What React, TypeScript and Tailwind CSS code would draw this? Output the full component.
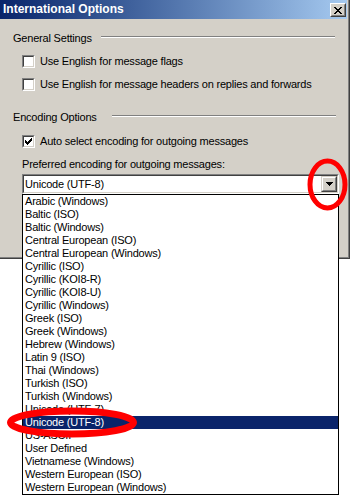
import React from "react";

const encodings = [
  "Arabic (Windows)",
  "Baltic (ISO)",
  "Baltic (Windows)",
  "Central European (ISO)",
  "Central European (Windows)",
  "Cyrillic (ISO)",
  "Cyrillic (KOI8-R)",
  "Cyrillic (KOI8-U)",
  "Cyrillic (Windows)",
  "Greek (ISO)",
  "Greek (Windows)",
  "Hebrew (Windows)",
  "Latin 9 (ISO)",
  "Thai (Windows)",
  "Turkish (ISO)",
  "Turkish (Windows)",
  "Unicode (UTF-7)",
  "Unicode (UTF-8)",
  "US-ASCII",
  "User Defined",
  "Vietnamese (Windows)",
  "Western European (ISO)",
  "Western European (Windows)",
];

function Checkbox({ checked }: { checked?: boolean }) {
  return (
    <div className="w-[13px] h-[13px] shrink-0 border border-t-[#808080] border-l-[#808080] border-b-white border-r-white">
      <div className="w-full h-full bg-white border border-t-[#404040] border-l-[#404040] border-b-[#d4d0c8] border-r-[#d4d0c8] flex items-center justify-center">
        {checked && (
          <svg width="7" height="7" viewBox="0 0 7 7" shapeRendering="crispEdges">
            {[2, 3, 4, 3, 2, 1, 0].map((y, x) => (
              <rect key={x} x={x} y={y} width="1" height="3" fill="#000" />
            ))}
          </svg>
        )}
      </div>
    </div>
  );
}

function GroupHeader({ label, textWidth, lineWidth }: { label: string; textWidth: number; lineWidth: number }) {
  return (
    <div className="flex h-[13px] pl-[13px]">
      <span className="leading-[13px] whitespace-nowrap" style={{ width: textWidth }}>{label}</span>
      <div className="mt-[4px] h-[2px] border-t border-t-[#808080] border-b border-b-white" style={{ width: lineWidth }} />
    </div>
  );
}

function CheckRow({ label, checked }: { label: string; checked?: boolean }) {
  return (
    <div className="flex items-center h-[13px] pl-[22px] gap-[5px]">
      <Checkbox checked={checked} />
      <span className="leading-[13px] whitespace-nowrap">{label}</span>
    </div>
  );
}

export default function App() {
  return (
    <div className="relative w-[352px] h-[496px] bg-white overflow-hidden text-black text-[11px] tracking-[-0.2px] font-['Liberation_Sans',Arial,sans-serif]">
      {/* Dialog window */}
      <div className="w-[350px] h-[259px] border-r border-b border-[#404040]">
        <div className="h-full bg-[#d4d0c8] border-r border-b border-[#808080] flex flex-col">
          {/* Title bar */}
          <div className="h-[19px] mr-[1px] flex items-start justify-between bg-linear-to-r from-[#0a246a] to-[#a6caf0]">
            <span className="pl-[3px] leading-[19px] text-[12px] font-bold text-white tracking-normal">International Options</span>
            <div className="mt-[3px] mr-[1px] w-[16px] h-[14px] border border-t-white border-l-white border-b-[#404040] border-r-[#404040] bg-[#d4d0c8]">
              <div className="w-full h-full border border-t-[#d4d0c8] border-l-[#d4d0c8] border-b-[#808080] border-r-[#808080] flex items-center justify-center">
                <svg width="8" height="7" viewBox="0 0 8 7" shapeRendering="crispEdges" fill="#000">
                  <rect x="0" y="0" width="2" height="1" />
                  <rect x="6" y="0" width="2" height="1" />
                  <rect x="1" y="1" width="2" height="1" />
                  <rect x="5" y="1" width="2" height="1" />
                  <rect x="2" y="2" width="4" height="1" />
                  <rect x="3" y="3" width="2" height="1" />
                  <rect x="2" y="4" width="4" height="1" />
                  <rect x="1" y="5" width="2" height="1" />
                  <rect x="5" y="5" width="2" height="1" />
                  <rect x="0" y="6" width="2" height="1" />
                  <rect x="6" y="6" width="2" height="1" />
                </svg>
              </div>
            </div>
          </div>

          {/* General settings */}
          <div className="mt-[13px]">
            <GroupHeader label="General Settings" textWidth={88} lineWidth={234} />
          </div>
          <div className="mt-[10px]">
            <CheckRow label="Use English for message flags" />
          </div>
          <div className="mt-[10px]">
            <CheckRow label="Use English for message headers on replies and forwards" />
          </div>

          {/* Encoding options */}
          <div className="mt-[20px]">
            <GroupHeader label="Encoding Options" textWidth={99} lineWidth={224} />
          </div>
          <div className="mt-[11px]">
            <CheckRow label="Auto select encoding for outgoing messages" checked />
          </div>
          <div className="mt-[10px] pl-[22px] h-[13px] leading-[13px] whitespace-nowrap">
            Preferred encoding for outgoing messages:
          </div>

          {/* Combo box with open list */}
          <div className="mt-[3px] ml-[22px] w-[317px] h-[20px] relative">
            <div className="h-full border border-t-[#808080] border-l-[#808080] border-b-white border-r-white">
              <div className="h-full bg-white border border-t-[#404040] border-l-[#404040] border-b-[#d4d0c8] border-r-[#d4d0c8] flex items-center">
                <span className="flex-1 pl-[1px] leading-[16px]">Unicode (UTF-8)</span>
                <div className="w-[16px] h-[16px] border border-t-[#d4d0c8] border-l-[#d4d0c8] border-b-[#404040] border-r-[#404040] bg-[#d4d0c8]">
                  <div className="w-full h-full border border-t-white border-l-white border-b-[#808080] border-r-[#808080] flex items-center justify-center">
                    <svg width="7" height="4" viewBox="0 0 7 4" shapeRendering="crispEdges" fill="#000">
                      <rect x="0" y="0" width="7" height="1" />
                      <rect x="1" y="1" width="5" height="1" />
                      <rect x="2" y="2" width="3" height="1" />
                      <rect x="3" y="3" width="1" height="1" />
                    </svg>
                  </div>
                </div>
              </div>
            </div>

            <div className="absolute left-0 top-[20px] w-[317px] bg-white border border-black flex flex-col">
              {encodings.map((e) => (
                <div
                  key={e}
                  className={`h-[13px] leading-[13px] pl-[2px] whitespace-nowrap ${e === "Unicode (UTF-8)" ? "bg-[#0a246a] text-white" : ""}`}
                >
                  {e}
                </div>
              ))}
            </div>
          </div>
        </div>
      </div>

      {/* Red annotation rings */}
      <svg className="absolute left-[304px] top-[156px]" width="48" height="58" viewBox="0 0 48 58">
        <ellipse cx="23.5" cy="28.5" rx="17.5" ry="23.5" fill="none" stroke="#ff0000" strokeWidth="5" />
      </svg>
      <svg className="absolute left-[4px] top-[404px]" width="138" height="38" viewBox="0 0 138 38">
        <ellipse cx="68" cy="18.5" rx="61.5" ry="11.5" fill="none" stroke="#ff0000" strokeWidth="7" />
      </svg>
    </div>
  );
}
